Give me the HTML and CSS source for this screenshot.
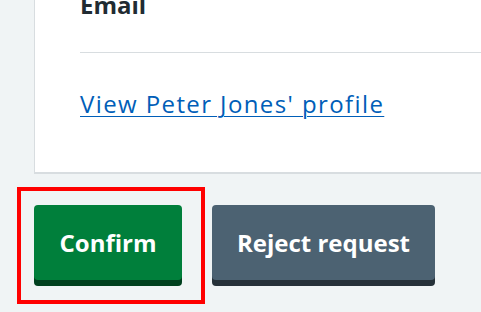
FILE: index.html
```html
<!DOCTYPE html>
<html lang="en">
<head>
<meta charset="utf-8">
<title>Confirm request</title>
<link rel="stylesheet" href="styles.css">
</head>
<body>
<main class="page">
  <section class="card">
    <div class="row">
      <span class="label">Email</span>
    </div>
    <div class="link-row">
      <a class="link" href="#">View Peter Jones' profile</a>
    </div>
  </section>
  <div class="actions">
    <div class="focus-wrap">
      <button class="btn btn-primary" type="button">Confirm</button>
    </div>
    <button class="btn btn-secondary" type="button">Reject request</button>
  </div>
</main>
</body>
</html>
```

FILE: styles.css
```css
html, body {
  margin: 0;
  padding: 0;
}
body {
  background: #f0f4f5;
  font-family: "Open Sans", "Noto Sans", Arial, sans-serif;
  color: #212b32;
  overflow: hidden;
  width: 481px;
  height: 312px;
}
.page {
  padding-left: 34px;
}
.card {
  width: 600px;
  background: #ffffff;
  border: 1px solid #d8dde0;
  border-top: 0;
  border-bottom-width: 2px;
  padding: 0 0 47px 45px;
  margin-top: -13px;
  box-sizing: border-box;
}
.row {
  border-bottom: 1px solid #d8dde0;
  padding-bottom: 29px;
}
.label {
  display: block;
  font-size: 24px;
  font-weight: 700;
  line-height: 36px;
}
.link-row {
  padding-top: 33px;
  line-height: 36px;
}
.link {
  font-size: 24px;
  letter-spacing: 1.4px;
  color: #005eb8;
  text-decoration: underline;
  text-underline-offset: 3px;
  text-decoration-thickness: 1px;
}
.actions {
  display: flex;
  align-items: flex-start;
  gap: 30px;
  padding-top: 31px;
}
.focus-wrap {
  position: relative;
}
.focus-wrap::after {
  content: "";
  position: absolute;
  left: -17px;
  top: -18px;
  right: -23px;
  bottom: -18px;
  border: 4px solid #ff0000;
  pointer-events: none;
}
.btn {
  display: flex;
  align-items: center;
  justify-content: center;
  box-sizing: border-box;
  height: 75px;
  padding: 0;
  margin: 0 0 6px 0;
  border: 0;
  border-radius: 4px;
  font-family: "Open Sans", "Noto Sans", Arial, sans-serif;
  font-size: 24px;
  font-weight: 700;
  white-space: nowrap;
  color: #ffffff;
  cursor: pointer;
}
.btn-primary {
  width: 148px;
  background: #007f3b;
  box-shadow: 0 6px 0 #00401e;
}
.btn-secondary {
  width: 223px;
  background: #4c6272;
  box-shadow: 0 6px 0 #263139;
}
```
